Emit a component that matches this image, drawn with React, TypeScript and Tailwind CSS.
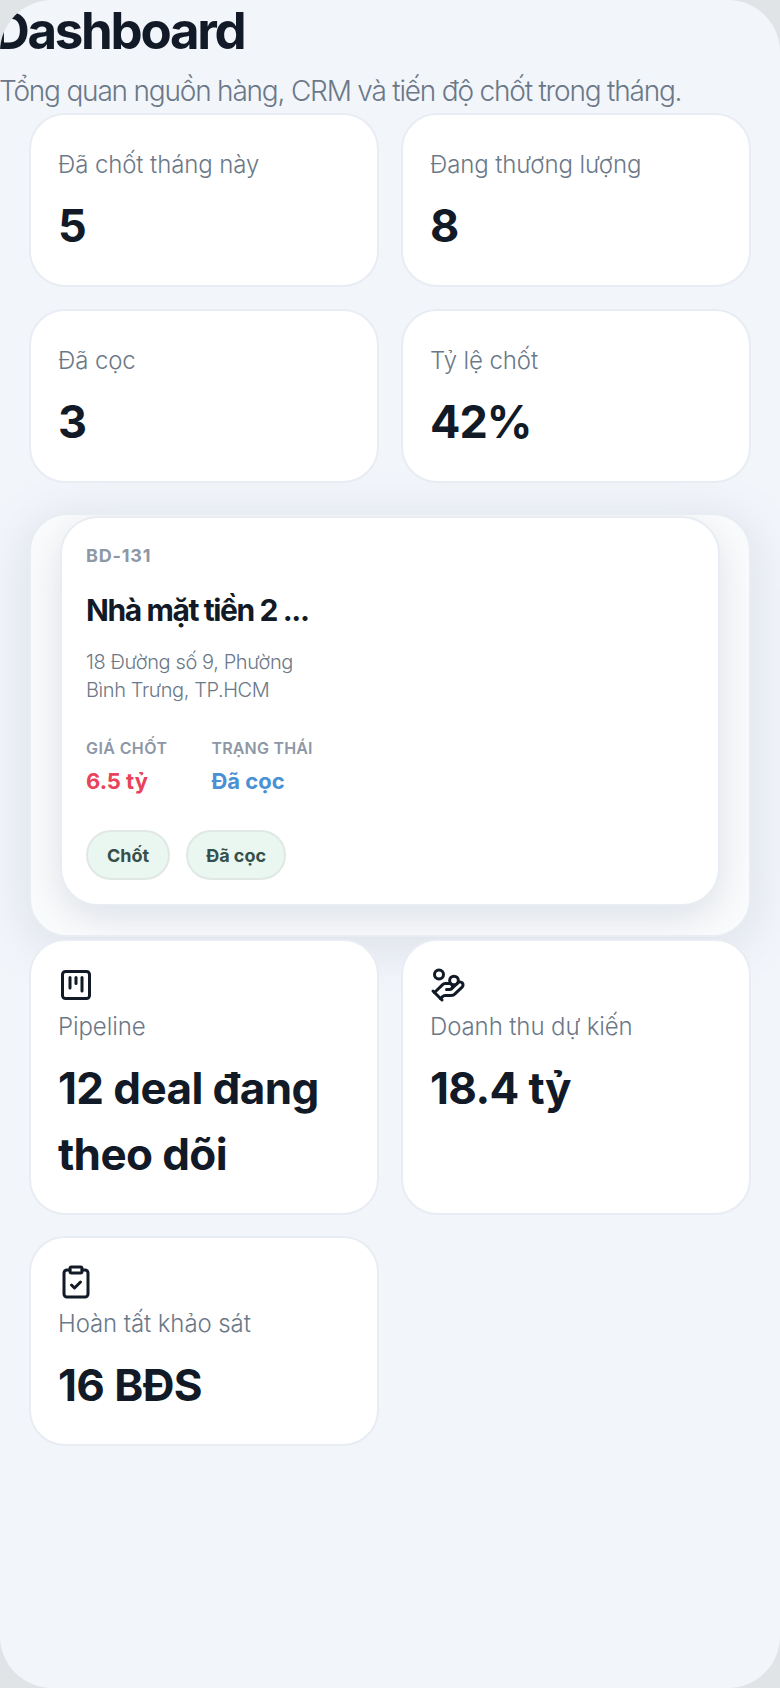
import { SquareKanban, HandCoins, ClipboardCheck } from "lucide-react"

const font = "font-['Inter','Noto_Sans',sans-serif]"

function StatCard({ label, value }: { label: string; value: string }) {
  return (
    <div className="h-[174px] rounded-[36px] border-2 border-[#e8edf3] bg-white px-[27px] pt-[34px]">
      <div className="text-[24px] leading-[32px] font-light tracking-[-0.1px] text-[#6b7888]">{label}</div>
      <div className="mt-[15px] text-[45px] leading-[60px] font-bold tracking-[-1px] text-[#111a26]">{value}</div>
    </div>
  )
}

function IconCard({ icon, label, value }: { icon: React.ReactNode; label: string; value: string }) {
  return (
    <div className="rounded-[36px] border-2 border-[#e8edf3] bg-white px-[27px] pt-[26px] pb-[26px]">
      <div className="h-[36px] text-[#111a26]">{icon}</div>
      <div className="mt-[8px] text-[24px] leading-[32px] font-light tracking-[-0.1px] text-[#6b7888]">{label}</div>
      <div className="mt-[12px] text-[44px] leading-[66px] font-bold tracking-[-0.6px] text-[#111a26]">{value}</div>
    </div>
  )
}

export default function App() {
  return (
    <div className={`h-[1688px] w-[780px] bg-[#e0e4e6] ${font}`}>
      <div className="h-full w-full overflow-hidden rounded-[52px] bg-[#f2f5fa]">
        <h1 className="-ml-[7px] mt-[3px] text-[51px] leading-[56px] font-bold tracking-[-2.3px] text-[#111a26]">Dashboard</h1>
        <p className="-ml-[1px] mt-[14px] text-[28px] leading-[36px] font-light tracking-[-1.2px] text-[#6b7888]">
          Tổng quan nguồn hàng, CRM và tiến độ chốt trong tháng.
        </p>

        <div className="mt-[4px] grid grid-cols-2 gap-x-[22px] gap-y-[22px] px-[29px]">
          <StatCard label="Đã chốt tháng này" value="5" />
          <StatCard label="Đang thương lượng" value="8" />
          <StatCard label="Đã cọc" value="3" />
          <StatCard label="Tỷ lệ chốt" value="42%" />
        </div>

        <div className="mx-[29px] mt-[30px] h-[424px] overflow-hidden rounded-[38px] border-2 border-[#e8edf3] bg-[#fbfcfd] px-[29px] pt-[1px] shadow-[0_8px_50px_rgba(120,135,155,0.2)]">
          <div className="h-[390px] rounded-[38px] border-2 border-[#e8edf3] bg-white px-[24px] pt-[26px] shadow-[0_12px_40px_rgba(130,145,165,0.25)]">
            <div className="text-[18px] leading-[24px] font-bold tracking-[0.8px] text-[#8d97a5]">BD-131</div>
            <div className="mt-[22px] text-[30px] leading-[40px] font-bold tracking-[-1.4px] text-[#111a26]">Nhà mặt tiền 2 ...</div>
            <div className="mt-[18px] w-[240px] text-[20px] leading-[28px] font-light tracking-[-0.4px] text-[#6b7888]">
              18 Đường số 9, Phường Bình Trưng, TP.HCM
            </div>
            <div className="mt-[32px] flex gap-[44px]">
              <div>
                <div className="text-[16px] leading-[24px] font-semibold tracking-[0.4px] text-[#8d97a5]">GIÁ CHỐT</div>
                <div className="mt-[5px] text-[22px] leading-[32px] font-bold text-[#e8435a]">6.5 tỷ</div>
              </div>
              <div>
                <div className="text-[16px] leading-[24px] font-semibold tracking-[0.2px] text-[#8d97a5]">TRẠNG THÁI</div>
                <div className="mt-[5px] text-[22px] leading-[32px] font-bold text-[#4a90d4]">Đã cọc</div>
              </div>
            </div>
            <div className="mt-[33px] flex gap-[16px]">
              <span className="flex h-[50px] items-center rounded-full border-2 border-[#e0e8e6] bg-[#eaf6f0] px-[19px] text-[18px] font-bold text-[#35504a]">Chốt</span>
              <span className="flex h-[50px] items-center rounded-full border-2 border-[#e0e8e6] bg-[#eaf6f0] px-[18px] text-[18px] font-bold text-[#35504a]">Đã cọc</span>
            </div>
          </div>
        </div>

        <div className="mt-[2px] grid grid-cols-2 gap-x-[22px] gap-y-[21px] px-[29px]">
          <IconCard icon={<SquareKanban size={36} strokeWidth={2} />} label="Pipeline" value="12 deal đang theo dõi" />
          <IconCard icon={<HandCoins size={36} strokeWidth={2} />} label="Doanh thu dự kiến" value="18.4 tỷ" />
          <IconCard icon={<ClipboardCheck size={36} strokeWidth={2} />} label="Hoàn tất khảo sát" value="16 BĐS" />
        </div>
      </div>
    </div>
  )
}
